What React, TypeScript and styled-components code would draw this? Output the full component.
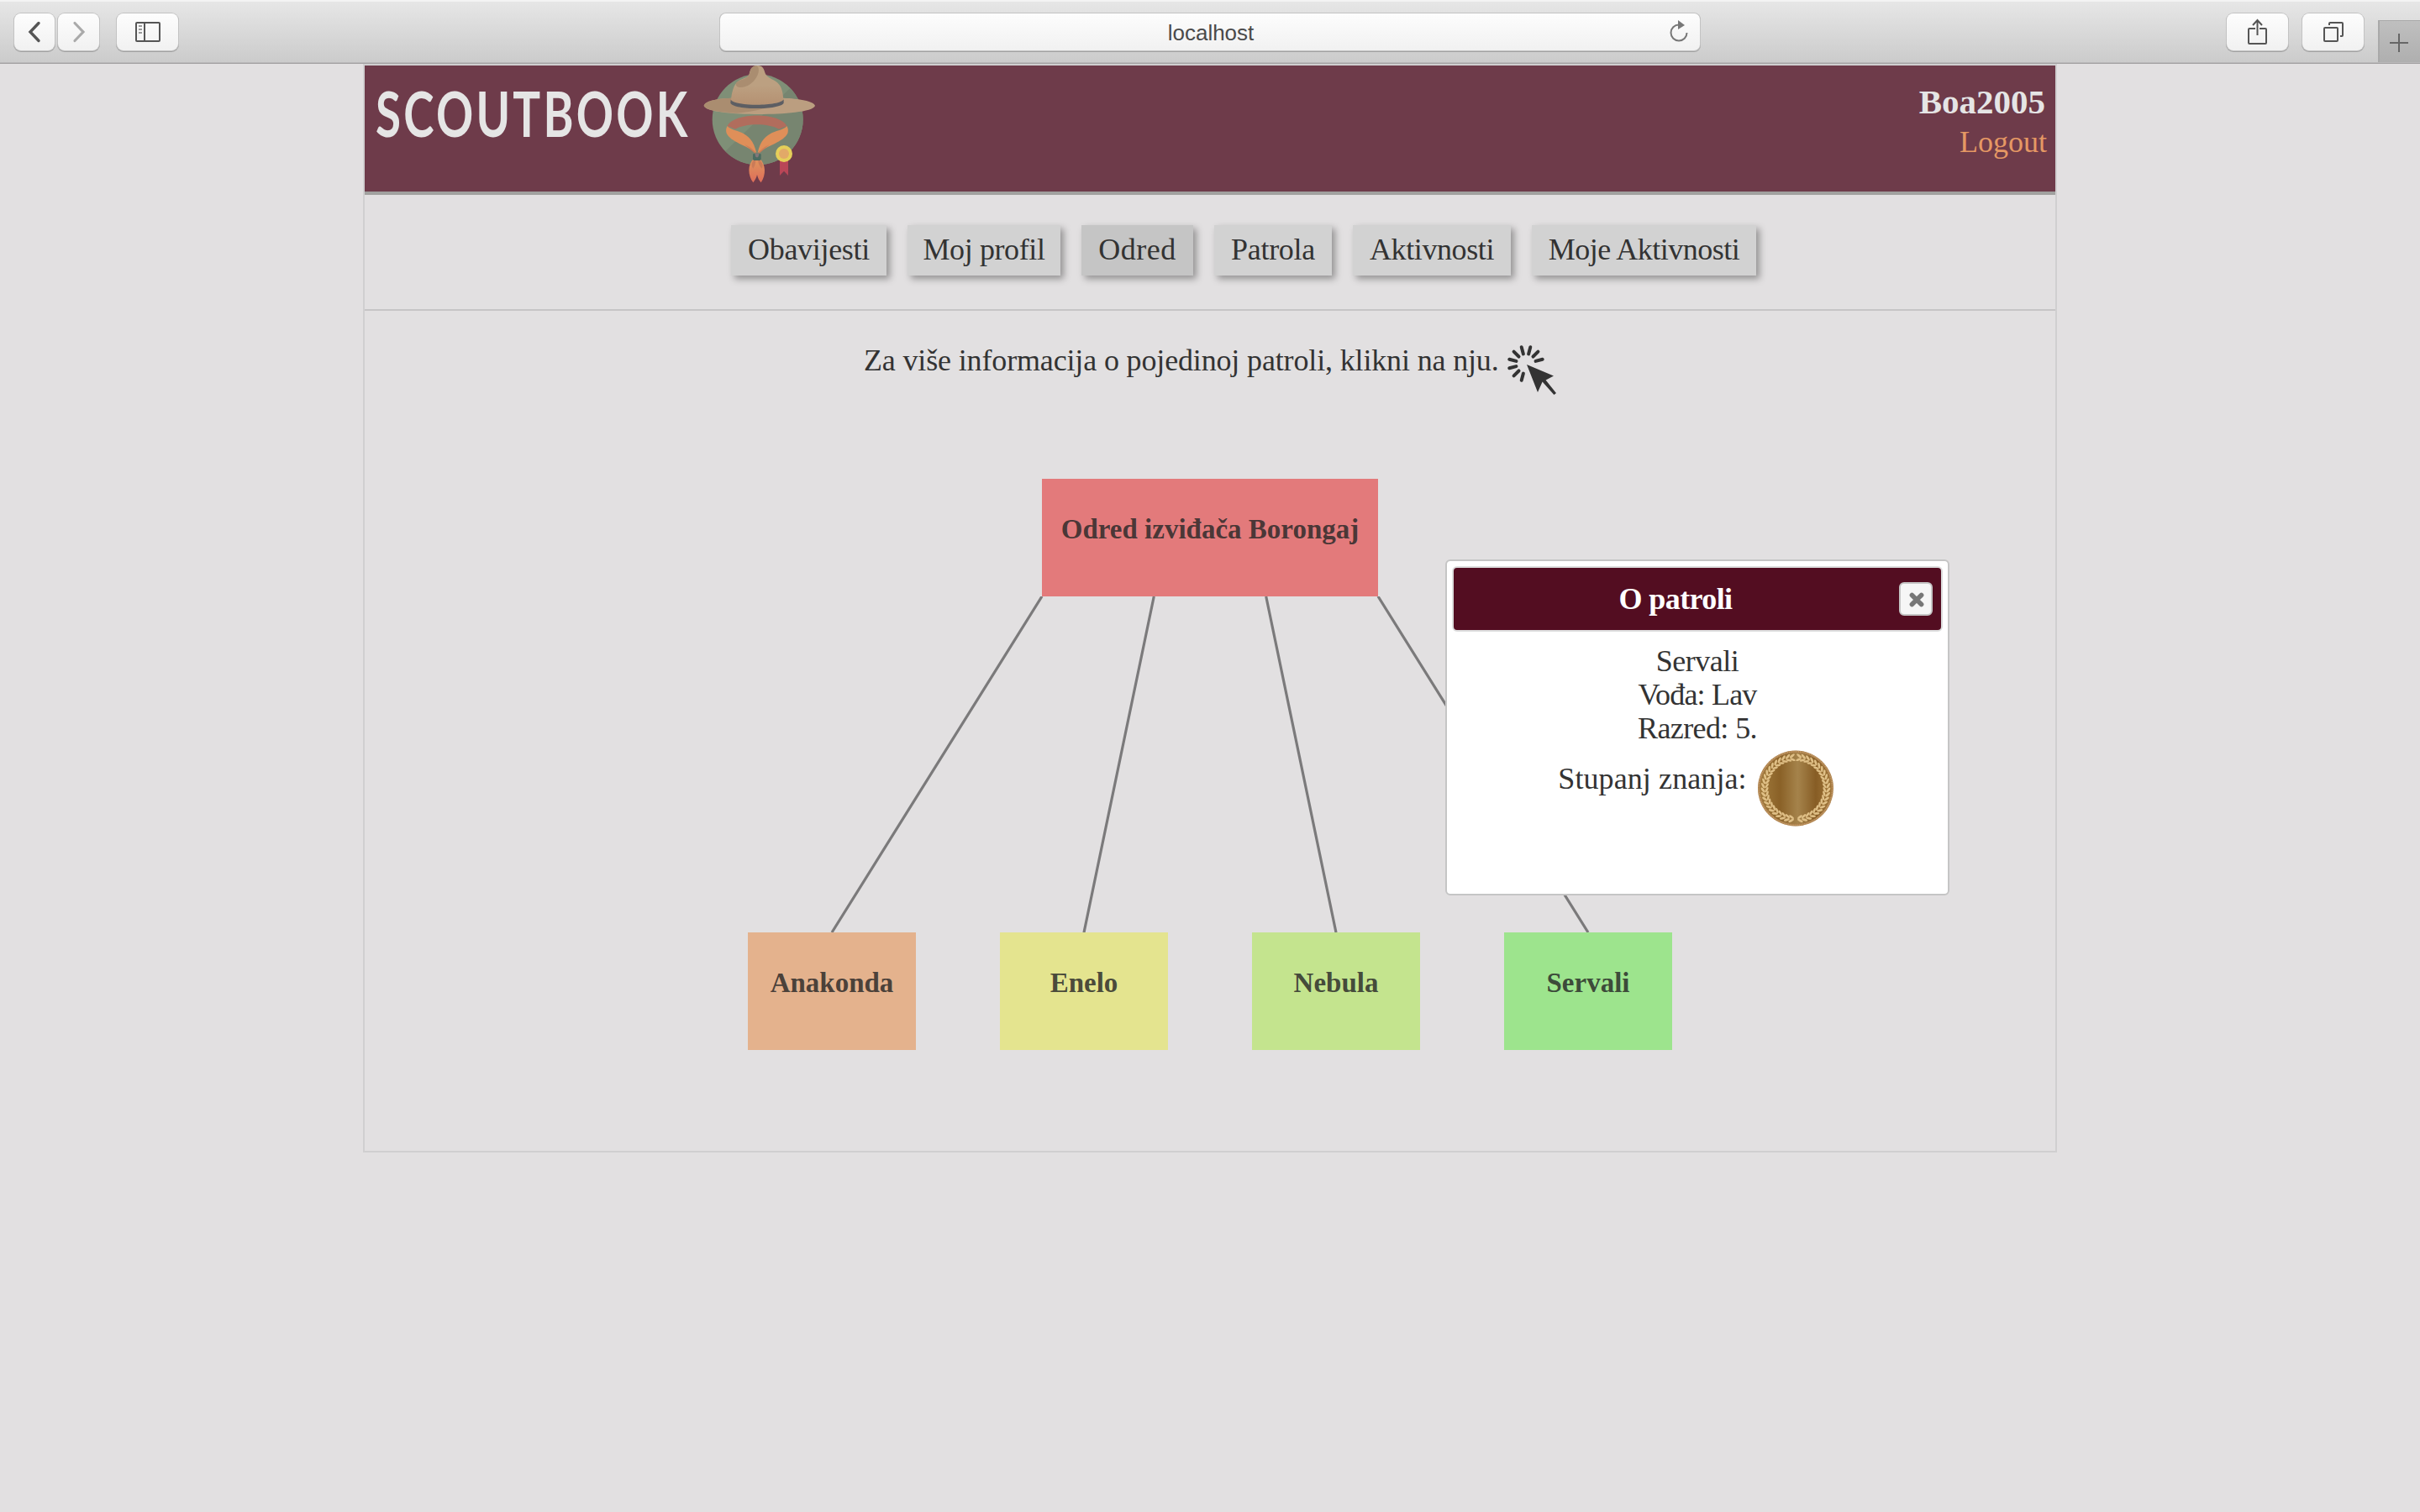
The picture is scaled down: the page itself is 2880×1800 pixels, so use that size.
import React from "react";
import styled, { createGlobalStyle } from "styled-components";

const serif = `"Liberation Serif", "Times New Roman", serif`;
const sans = `"Liberation Sans", Arial, sans-serif`;

const GlobalStyle = createGlobalStyle`
  *, *::before, *::after { box-sizing: border-box; }
  body {
    margin: 0;
    background: #e2e0e1;
    color: #333;
    font-family: ${serif};
    font-size: 36px;
    line-height: 40px;
  }
`;

const Screen = styled.div`
  display: flex;
  flex-direction: column;
  align-items: center;
  width: 2880px;
  height: 1800px;
  overflow: hidden;
  position: relative;
`;

/* ---------- browser chrome ---------- */

const Toolbar = styled.header`
  display: grid;
  grid-template-columns: 857px 1166px 1fr;
  width: 100%;
  height: 76px;
  flex: none;
  background: linear-gradient(#e7e7e7, #cbcbcb);
  border-bottom: 1px solid #a3a1a2;
  box-shadow: inset 0 2px 0 #f3f3f3, inset 0 -1px 0 #b9b8b9;
`;

const ToolsLeft = styled.div`
  display: flex;
  padding: 16px 0 0 17px;
`;

const ToolsRight = styled.div`
  display: flex;
  justify-content: flex-end;
  padding-top: 16px;
`;

const ToolButton = styled.button<{ $width: number; $after?: number }>`
  display: flex;
  align-items: center;
  justify-content: center;
  width: ${(p) => p.$width}px;
  height: 44px;
  margin: 0 ${(p) => p.$after ?? 0}px 0 0;
  padding: 0;
  border: 0;
  border-radius: 8px;
  background: linear-gradient(#fdfdfd, #f1f1f1);
  box-shadow: 0 0 0 1px #c3c3c3, 0 1px 0 1px #a2a2a2;
`;

const AddressBar = styled.div`
  display: flex;
  align-items: center;
  height: 44px;
  margin-top: 16px;
  padding: 0 13px 0 39px;
  border-radius: 7px;
  background: linear-gradient(#fdfdfd, #f1f1f1);
  box-shadow: 0 0 0 1px #c3c3c3, 0 1px 0 1px #a2a2a2;
`;

const Address = styled.span`
  flex: 1;
  padding-top: 2px;
  text-align: center;
  font: 26px/30px ${sans};
  color: #4a4a4a;
`;

const NewTab = styled.button`
  display: flex;
  width: 50px;
  height: 50px;
  margin: 8px 0 0;
  padding: 15px 0 0 12px;
  border: solid #a9a9a9;
  border-width: 1px 0 0 2px;
  background: linear-gradient(#bfbfbf, #afafaf);
`;

/* ---------- page ---------- */

const Page = styled.main`
  width: 2016px;
  height: 1296px;
  flex: none;
  border: 2px solid #d0cfd0;
`;

const Banner = styled.div`
  display: flex;
  justify-content: space-between;
  height: 154px;
  background: #6e3b4a;
  border-bottom: 4px solid #a1a19f;
`;

const Brand = styled.div`
  display: flex;
`;

const BrandName = styled.h1`
  width: 390px;
  margin: 12px 0 0 13px;
  transform: scaleX(0.74);
  transform-origin: left;
  font: 700 74px/90px Lato, sans-serif;
  letter-spacing: 4.4px;
  color: #e5e5e5;
  white-space: nowrap;
`;

const Account = styled.div`
  display: flex;
  flex-direction: column;
  align-items: flex-end;
  padding: 23px 10px 0 0;
`;

const UserName = styled.strong`
  padding-right: 2px;
  font-size: 41px;
  line-height: 40px;
  color: #e5e5e5;
`;

const Logout = styled.a`
  margin-top: 8px;
  color: #e59864;
`;

const Nav = styled.nav`
  display: flex;
  justify-content: center;
  align-items: flex-start;
  gap: 25px;
  height: 138px;
  padding: 36px 0 0 80px;
  border-bottom: 2px solid #c6c5c6;
`;

const NavItem = styled.a<{ $width: number; $track: number; $active?: boolean }>`
  display: flex;
  justify-content: center;
  width: ${(p) => p.$width}px;
  height: 60px;
  padding-top: 9px;
  white-space: nowrap;
  letter-spacing: ${(p) => p.$track}px;
  background: ${(p) => (p.$active ? "#c5c5c5" : "#d2d2d2")};
  box-shadow: 4px 4px 8px rgba(0, 0, 0, 0.35);
`;

const Hint = styled.div`
  display: flex;
  justify-content: center;
  gap: 12px;
  height: 200px;
  padding-top: 39px;
`;

const HintText = styled.p`
  width: 754px;
  margin: 0;
  white-space: nowrap;
  letter-spacing: -0.15px;
`;

const Burst = styled.svg`
  margin-top: 1px;
`;

const Chart = styled.section`
  display: flex;
  flex-direction: column;
  align-items: center;
`;

const ChartRow = styled.div`
  display: flex;
  gap: 100px;
`;

const Node = styled.div<{ $color: string; $wide?: boolean }>`
  width: ${(p) => (p.$wide ? 400 : 200)}px;
  height: 140px;
  padding-top: 40px;
  background: ${(p) => p.$color};
  color: rgba(40, 40, 40, 0.84);
  font-size: 33px;
  font-weight: 700;
  text-align: center;
  white-space: nowrap;
`;

/* ---------- dialog ---------- */

const Dialog = styled.aside`
  position: absolute;
  left: 1720px;
  top: 666px;
  width: 600px;
  height: 400px;
  padding: 6px;
  border: 2px solid #c5c5c5;
  border-radius: 6px;
  background: #fff;
`;

const DialogBar = styled.div`
  display: flex;
  align-items: center;
  justify-content: space-between;
  height: 78px;
  padding-right: 10px;
  border: 2px solid #ddd;
  border-radius: 6px;
  background: #530d21;
`;

const DialogTitle = styled.h2`
  width: 528px;
  margin: 0;
  text-align: center;
  font-size: 36px;
  line-height: 40px;
  letter-spacing: -0.6px;
  color: #fff;
`;

const CloseButton = styled.button`
  display: flex;
  align-items: center;
  justify-content: center;
  width: 40px;
  height: 40px;
  padding: 2px 0 0 1px;
  border: 2px solid #c5c5c5;
  border-radius: 6px;
  background: #f6f6f6;
`;

const DialogBody = styled.div`
  display: flex;
  flex-direction: column;
  align-items: center;
  padding-top: 15px;
`;

const Line = styled.div<{ $track: number }>`
  letter-spacing: ${(p) => p.$track}px;
`;

const Rank = styled.div`
  display: flex;
  gap: 13px;
  padding: 6px 4px 0 0;
`;

const RankLabel = styled.span`
  padding-top: 14px;
  letter-spacing: 0.1px;
`;

const nav = [
  { label: "Obavijesti", width: 185, track: -0.3 },
  { label: "Moj profil", width: 182, track: -0.4 },
  { label: "Odred", width: 133, track: 0.5 },
  { label: "Patrola", width: 140, track: -0.3 },
  { label: "Aktivnosti", width: 188, track: -0.4 },
  { label: "Moje Aktivnosti", width: 267, track: -0.5 },
];

const currentPage = "Odred";

const patrols = [
  { name: "Anakonda", color: "#e4b28d" },
  { name: "Enelo", color: "#e4e48f" },
  { name: "Nebula", color: "#c4e48e" },
  { name: "Servali", color: "#9de48d" },
];

const ScoutLogo = () => (
  <svg width="134" height="141" viewBox="51 24 402 423">
    <defs>
      <clipPath id="disc"><circle cx="245" cy="217" r="162" /></clipPath>
      <linearGradient id="crown" x2="0" y2="1">
        <stop offset="0.5" stopColor="#bca081" /><stop offset="1" stopColor="#b59172" />
      </linearGradient>
      <linearGradient id="tail" x2="0" y2="1">
        <stop offset="0.2" stopColor="#df8e5c" /><stop offset="1" stopColor="#de6c59" />
      </linearGradient>
    </defs>
    <circle cx="245" cy="217" r="162" fill="#7f8f77" />
    <path d="M130 330 L370 96 L440 120 V400 H180Z" fill="#778570" clipPath="url(#disc)" />
    <path d="M53 168 C57 148 108 142 150 140 H338 C390 142 446 150 450 168 C442 190 335 198 250 198 C160 198 62 190 53 168Z" fill="#bb9e80" />
    <path d="M53 168 C57 148 108 142 150 140 C180 164 250 168 300 164 C260 184 210 190 170 194 C108 190 60 184 53 168Z" fill="#aa8d70" />
    <path d="M150 146 C152 124 158 98 169 86 C182 70 210 72 215 54 C219 36 224 25 245 24 C264 24 267 36 272 52 C278 70 308 74 322 92 C334 108 336 130 337 148 C325 169 164 170 150 146Z" fill="url(#crown)" />
    <path d="M169 85 C185 71 210 75 217 50 C221 34 227 25 242 25 C252 32 250 50 242 64 C228 90 200 106 176 101 C167 98 166 92 169 85Z" fill="#aa8d70" />
    <path d="M149 146 C164 170 324 171 338 145 L338 158 C325 183 162 184 148 158Z" fill="#5d5e63" />
    <path d="M137 240 C160 190 325 190 349 240 L321 251 C285 229 200 229 165 251Z" fill="#b16d5d" />
    <path d="M137 240 C156 265 222 248 241 336 C206 310 148 296 134 266 C131 256 132 248 137 240Z M349 240 C330 265 264 248 245 336 C280 310 338 296 352 266 C355 256 354 248 349 240Z" fill="#df8f59" />
    <path d="M198 306 Q232 321 241 342 Q226 330 198 306Z M288 306 Q254 321 245 342 Q260 330 288 306Z" fill="#cd7d57" />
    <path d="M231 357 C208 378 210 416 229 442 C236 432 241 424 243 414 C246 426 250 434 257 442 C276 414 274 378 253 357Z" fill="url(#tail)" />
    <path d="M233 360 C220 374 223 382 229 392 C236 382 238 372 237 361Z M251 360 C264 374 266 382 260 392 C250 382 246 372 247 361Z" fill="#ca7b58" />
    <rect x="228" y="338" width="29" height="25" rx="5" fill="#4c6b60" />
    <path d="M235 338 H251 L247 350 Q243 354 238 350Z" fill="#817779" />
    <path d="M324 360 H354 V417 L339 401 L324 417Z" fill="#b94657" />
    <circle cx="339" cy="339" r="30" fill="#e5cf59" />
    <circle cx="339" cy="339" r="18" fill="#e2a968" />
  </svg>
);

const ClickIcon = () => (
  <Burst width="58" height="61" viewBox="0 0 58 61">
    {[15, 45, 75, -15, -45, -75, -105, -135, -165].map((a) => (
      <line key={a} x1="22" y1="11" x2="22" y2="2.6" transform={`rotate(${a} 22 23)`} stroke="#333" strokeWidth="4" strokeLinecap="round" />
    ))}
    <path d="M23 24 L55 37.5 L45.6 42.6 L58 58 L55.4 60 L41.6 44.6 L36 57Z" fill="#333" />
  </Burst>
);

const leafAngles = Array.from({ length: 22 }, (_, i) => 5 + i * 7.9);

const Medal = () => (
  <svg width="90" height="91" viewBox="-45 -45.5 90 91">
    <defs>
      <linearGradient id="bronze">
        <stop offset="0" stopColor="#a07a3c" />
        <stop offset="0.28" stopColor="#8a6127" />
        <stop offset="0.53" stopColor="#a5834b" />
        <stop offset="0.78" stopColor="#875d25" />
        <stop offset="1" stopColor="#a07639" />
      </linearGradient>
    </defs>
    <circle r="45" fill="#a97d4a" />
    <circle r="43.8" fill="none" stroke="#c59d68" strokeWidth="2" strokeDasharray="1.1 1.1" />
    <circle r="42.5" fill="url(#bronze)" />
    {[1, -1].map((side) => (
      <g key={side} transform={`scale(${side} 1)`} fill="#dfbf86">
        {leafAngles.map((a) => (
          <g key={a} transform={`rotate(${-a}) translate(0 36.5)`}>
            <ellipse cx="2" cy="2.3" rx="3.6" ry="1.4" transform="rotate(32 2 2.3)" />
            <ellipse cx="2" cy="-2.1" rx="3.4" ry="1.3" transform="rotate(-32 2 -2.1)" />
          </g>
        ))}
      </g>
    ))}
  </svg>
);

export default function App() {
  return (
    <Screen>
      <GlobalStyle />
      <Toolbar>
        <ToolsLeft>
          <ToolButton $width={48} $after={4} aria-label="Back">
            <svg width="16" height="26" viewBox="0 0 16 26" fill="none" stroke="#555" strokeWidth="3.4" strokeLinecap="round"><path d="M13 2.5 L3 13 L13 23.5" /></svg>
          </ToolButton>
          <ToolButton $width={49} $after={21} aria-label="Forward">
            <svg width="16" height="26" viewBox="0 0 16 26" fill="none" stroke="#aaa" strokeWidth="3.2" strokeLinecap="round"><path d="M3 2.5 L13 13 L3 23.5" /></svg>
          </ToolButton>
          <ToolButton $width={73} aria-label="Sidebar">
            <svg width="30" height="24" viewBox="0 0 30 24" fill="none" stroke="#555" strokeWidth="2"><rect x="1" y="1" width="28" height="22" rx="1" /><path d="M11 1 V23" /><path d="M4 5 H8 M4 9 H8 M4 13 H8" stroke="#999" /></svg>
          </ToolButton>
        </ToolsLeft>
        <AddressBar>
          <Address>localhost</Address>
          <svg width="24" height="28" viewBox="0 0 24 28"><path d="M12 5.5 A9.5 9.5 0 1 0 21.5 15" fill="none" stroke="#777" strokeWidth="2" /><path d="M11 0 L19 6 L11 11Z" fill="#777" /></svg>
        </AddressBar>
        <ToolsRight>
          <ToolButton $width={73} $after={17} aria-label="Share">
            <svg width="24" height="32" viewBox="0 0 24 32" fill="none" stroke="#555" strokeWidth="2"><path d="M9 12 H2 Q1 12 1 13 V29 Q1 30 2 30 H21 Q22 30 22 29 V13 Q22 12 21 12 H14 M11.5 20 V2 M6 8 L11.5 2 L17 8" /></svg>
          </ToolButton>
          <ToolButton $width={73} $after={17} aria-label="Tabs">
            <svg width="26" height="26" viewBox="0 0 26 26" fill="none" stroke="#555" strokeWidth="2"><rect x="2" y="8" width="16" height="16" rx="1" /><path d="M8 5 V3 Q8 2 9 2 H23 Q24 2 24 3 V17 Q24 18 23 18 H21" /></svg>
          </ToolButton>
          <NewTab aria-label="New tab">
            <svg width="22" height="22" viewBox="0 0 22 22" stroke="#666" strokeWidth="2"><path d="M0 11 H22 M11 0 V22" /></svg>
          </NewTab>
        </ToolsRight>
      </Toolbar>

      <Page>
        <Banner>
          <Brand>
            <BrandName>SCOUTBOOK</BrandName>
            <ScoutLogo />
          </Brand>
          <Account>
            <UserName>Boa2005</UserName>
            <Logout>Logout</Logout>
          </Account>
        </Banner>
        <Nav>
          {nav.map((n) => (
            <NavItem key={n.label} $width={n.width} $track={n.track} $active={n.label === currentPage}>
              {n.label}
            </NavItem>
          ))}
        </Nav>
        <Hint>
          <HintText>Za više informacija o pojedinoj patroli, klikni na nju.</HintText>
          <ClickIcon />
        </Hint>
        <Chart>
          <Node $color="#e37a7b" $wide>Odred izviđača Borongaj</Node>
          <svg width="1100" height="400" viewBox="0 0 1100 400" stroke="#7b7a7b" strokeWidth="3.2">
            <path d="M350 0 L100 400 M483.3 0 L400 400 M616.7 0 L700 400 M750 0 L1000 400" />
          </svg>
          <ChartRow>
            {patrols.map((p) => (
              <Node key={p.name} $color={p.color}>{p.name}</Node>
            ))}
          </ChartRow>
        </Chart>
      </Page>

      <Dialog>
        <DialogBar>
          <DialogTitle>O patroli</DialogTitle>
          <CloseButton aria-label="Close">
            <svg width="18" height="18" viewBox="0 0 18 18" stroke="#777" strokeWidth="5.6" strokeLinecap="round"><path d="M3.4 3.4 L14.6 14.6 M14.6 3.4 L3.4 14.6" /></svg>
          </CloseButton>
        </DialogBar>
        <DialogBody>
          <Line $track={-0.5}>Servali</Line>
          <Line $track={-0.8}>Vođa: Lav</Line>
          <Line $track={-0.6}>Razred: 5.</Line>
          <Rank>
            <RankLabel>Stupanj znanja:</RankLabel>
            <Medal />
          </Rank>
        </DialogBody>
      </Dialog>
    </Screen>
  );
}
